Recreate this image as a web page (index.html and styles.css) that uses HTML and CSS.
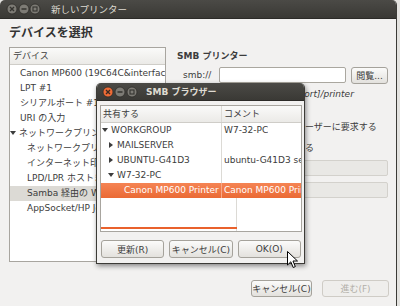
FILE: index.html
```html
<!DOCTYPE html>
<html lang="ja">
<head>
  <meta charset="UTF-8">
  <title>新しいプリンター</title>
  <link rel="stylesheet" href="styles.css">
</head>
<body>
  <div class="window">
    <div class="titlebar">
      <svg class="wbtns" width="36" height="12" viewBox="0 0 36 12">
        <circle cx="6" cy="6" r="5" fill="#7d7b75" stroke="#2e2d2a" stroke-width="0.8"/>
        <path d="M4 4 L8 8 M8 4 L4 8" stroke="#34332f" stroke-width="1.4"/>
        <circle cx="18" cy="6" r="5" fill="#7d7b75" stroke="#2e2d2a" stroke-width="0.8"/>
        <path d="M15.5 6 H20.5" stroke="#34332f" stroke-width="1.6"/>
        <circle cx="29" cy="6" r="5" fill="#7d7b75" stroke="#2e2d2a" stroke-width="0.8"/>
        <rect x="27" y="4" width="4" height="4" fill="none" stroke="#34332f" stroke-width="1.1"/>
      </svg>
      <span class="title">新しいプリンター</span>
    </div>

    <div class="content">
      <h1>デバイスを選択</h1>
      <div class="main">
        <div class="devices">
          <div class="col-head">デバイス</div>
          <ul class="dev-list">
            <li>Canon MP600 (19C64C&amp;interface)</li>
            <li>LPT #1</li>
            <li>シリアルポート #1</li>
            <li>URI の入力</li>
            <li class="group"><span class="tri down"></span>ネットワークプリンター</li>
            <li class="child">ネットワークプリンターの検索</li>
            <li class="child">インターネット印刷プロトコル (ipp)</li>
            <li class="child">LPD/LPR ホストまたはプリンター</li>
            <li class="child selected">Samba 経由の Windows プリンター</li>
            <li class="child">AppSocket/HP JetDirect</li>
          </ul>
        </div>

        <div class="detail">
          <h2>SMB プリンター</h2>
          <div class="uri-row">
            <span class="uri-label">smb://</span>
            <span class="entry"></span>
            <span class="btn small">閲覧...</span>
          </div>
          <div class="hint">smb://[workgroup/]server[:port]/printer</div>
          <h2 class="auth">認証</h2>
          <div class="radio"><span class="dot"></span>認証が必要な場合はユーザーに要求する</div>
          <div class="radio second"><span class="dot"></span>認証の詳細を今設定する</div>
          <div class="field"><span>パスワード:</span><span class="entry off"></span></div>
          <div class="field"><span>ユーザー名:</span><span class="entry off"></span></div>
        </div>
      </div>

      <div class="actions">
        <span class="btn cancel">キャンセル(C)</span>
        <span class="btn next off">進む(F)</span>
      </div>
    </div>

    <div class="smb-dialog">
      <div class="titlebar dlg">
        <svg class="wbtns" width="36" height="12" viewBox="0 0 36 12">
          <circle cx="6" cy="6" r="5" fill="#ef6b36" stroke="#2e2d2a" stroke-width="0.8"/>
          <path d="M4 4 L8 8 M8 4 L4 8" stroke="#3a2a22" stroke-width="1.4"/>
          <circle cx="18" cy="6" r="5" fill="#7d7b75" stroke="#2e2d2a" stroke-width="0.8"/>
          <path d="M15.5 6 H20.5" stroke="#34332f" stroke-width="1.6"/>
          <circle cx="30" cy="6" r="5" fill="#7d7b75" stroke="#2e2d2a" stroke-width="0.8"/>
          <rect x="28" y="4" width="4" height="4" fill="none" stroke="#34332f" stroke-width="1.1"/>
        </svg>
        <span class="title">SMB ブラウザー</span>
      </div>
      <div class="tree">
        <div class="tree-head">
          <span class="c1">共有する</span>
          <span class="c2">コメント</span>
        </div>
        <div class="tree-row"><span class="c1 l0"><span class="tri down"></span>WORKGROUP</span><span class="c2">W7-32-PC</span></div>
        <div class="tree-row"><span class="c1 l1"><span class="tri right"></span>MAILSERVER</span><span class="c2"></span></div>
        <div class="tree-row"><span class="c1 l1"><span class="tri right"></span>UBUNTU-G41D3</span><span class="c2">ubuntu-G41D3 server</span></div>
        <div class="tree-row"><span class="c1 l1"><span class="tri down"></span>W7-32-PC</span><span class="c2"></span></div>
        <div class="tree-row sel"><span class="c1 l2">Canon MP600 Printer</span><span class="c2">Canon MP600 Printer</span></div>
        <div class="tree-fill"><span class="scroll"></span></div>
      </div>
      <div class="dlg-actions">
        <span class="btn">更新(R)</span>
        <span class="btn">キャンセル(C)</span>
        <span class="btn">OK(O)</span>
      </div>
    </div>

    <svg class="cursor" width="12" height="18" viewBox="0 0 12 18">
      <path d="M0.5 0.5 L0.5 14 L3.8 10.8 L6.2 16.5 L8.3 15.6 L6 10 L10.5 10 Z" fill="#fff" stroke="#000" stroke-width="1"/>
    </svg>
  </div>
</body>
</html>
```

FILE: styles.css
```css
body {
  margin: 0;
  background-color: #e4e3e0;
  font-family: "DejaVu Sans", "Noto Sans CJK JP", sans-serif;
  font-size: 9px;
  color: #3c3c3c;
}
.window {
  position: relative;
  width: 396px;
  height: 306px;
  background-color: #f2f1f0;
  border-right: 1px solid #3c3b37;
  border-radius: 5px 5px 0 0;
  overflow: hidden;
}
.titlebar {
  display: flex;
  align-items: center;
  height: 19px;
  padding-left: 6px;
  background: linear-gradient(#4b4a46, #3a3935);
  border-bottom: 1px solid #2c2b28;
  box-sizing: border-box;
}
.wbtns { flex: none; }
.titlebar .title {
  margin-left: 9px;
  color: #dfdbd2;
  font-size: 9.5px;
}
.content {
  padding: 6px 7px 0 9px;
}
h1 {
  margin: 0;
  height: 16px;
  line-height: 16px;
  font-size: 12px;
  font-weight: bold;
  color: #333;
}
.main {
  display: flex;
  gap: 11px;
  margin-top: 6px;
  height: 215px;
}
.devices {
  width: 157px;
  flex: none;
  background-color: #fff;
  border: 1px solid #a8a59f;
  box-sizing: border-box;
  overflow: hidden;
}
.col-head {
  height: 17px;
  line-height: 16px;
  padding-left: 3px;
  background: linear-gradient(#fafaf9, #ebeae7);
  border-bottom: 1px solid #cfcdc8;
  box-sizing: border-box;
}
.dev-list {
  list-style: none;
  margin: 1px 0 0;
  padding: 0;
}
.dev-list li {
  height: 15px;
  line-height: 15px;
  padding-left: 10px;
  white-space: nowrap;
}
.dev-list .group { padding-left: 0; }
.dev-list .child { padding-left: 17px; }
.dev-list .selected { background-color: #dcdad5; }
.tri {
  display: inline-block;
  width: 0;
  height: 0;
  margin-right: 3px;
  vertical-align: 1px;
}
.tri.down {
  border-left: 3px solid transparent;
  border-right: 3px solid transparent;
  border-top: 4px solid #3c3c3c;
}
.tri.right {
  border-top: 3px solid transparent;
  border-bottom: 3px solid transparent;
  border-left: 4px solid #3c3c3c;
  margin-left: 1px;
  margin-right: 4px;
  vertical-align: 0;
}
.detail {
  flex: 1;
  padding-top: 2px;
}
h2 {
  margin: 0;
  height: 15px;
  line-height: 15px;
  font-size: 9px;
  font-weight: bold;
}
.uri-row {
  display: flex;
  align-items: center;
  margin-top: 2px;
  height: 18px;
  padding-left: 6px;
}
.uri-label { width: 36px; }
.entry {
  display: block;
  width: 127px;
  height: 16px;
  background-color: #fff;
  border: 1px solid #aaa79f;
  border-radius: 2px;
  box-sizing: border-box;
}
.btn {
  display: flex;
  align-items: center;
  justify-content: center;
  height: 17px;
  border: 1px solid #a5a29b;
  border-radius: 3px;
  background: linear-gradient(#fbfbfa, #e3e1dd);
  box-sizing: border-box;
  white-space: nowrap;
  color: #3c3c3c;
}
.btn.small {
  width: 37px;
  margin-left: 5px;
}
.hint {
  height: 15px;
  line-height: 15px;
  margin-top: 3px;
  font-style: italic;
  white-space: nowrap;
}
.auth {
  height: 14px;
  line-height: 14px;
}
.radio {
  display: flex;
  align-items: center;
  height: 20px;
  padding-left: 24px;
  white-space: nowrap;
}
.radio.second { margin-top: 1px; }
.dot {
  width: 8px;
  height: 8px;
  margin-right: 4px;
  border: 1px solid #999;
  border-radius: 50%;
  background: #fff;
}
.field {
  display: flex;
  align-items: center;
  justify-content: space-between;
  height: 16px;
  margin-top: 6px;
  padding-left: 34px;
  color: #a09d96;
}
.radio + .field { margin-top: 3px; }
.entry.off {
  width: 120px;
  background-color: #e9e8e5;
  border-color: #d3d1cc;
  margin-right: 1px;
}
.actions {
  display: flex;
  justify-content: flex-end;
  gap: 10px;
  margin-top: 18px;
}
.actions .cancel { width: 61px; }
.actions .next { width: 67px; }
.btn.off {
  color: #b3b0a9;
  border-color: #cfccc6;
  background: #efeeec;
}
.smb-dialog {
  position: absolute;
  left: 96px;
  top: 83px;
  width: 209px;
  height: 181px;
  background-color: #f2f1f0;
  border: 1px solid #3c3b37;
  border-top: none;
  border-radius: 5px 5px 0 0;
  box-sizing: border-box;
  box-shadow: 1px 2px 5px rgba(0, 0, 0, 0.45);
  overflow: hidden;
}
.titlebar.dlg {
  height: 18px;
  padding-left: 5px;
}
.titlebar.dlg .title {
  margin-left: 8px;
  font-weight: bold;
  font-size: 9px;
}
.tree {
  margin: 4px 2px 0 3px;
  height: 127px;
  background-color: #fff;
  border: 1px solid #a8a59f;
  box-sizing: border-box;
  display: flex;
  flex-direction: column;
}
.tree-head,
.tree-row {
  display: flex;
  white-space: nowrap;
  overflow: hidden;
}
.tree-head {
  height: 17px;
  line-height: 16px;
  background: linear-gradient(#fafaf9, #ebeae7);
  border-bottom: 1px solid #cfcdc8;
  box-sizing: border-box;
}
.tree-row {
  height: 15px;
  line-height: 15px;
}
.c1 {
  width: 121px;
  flex: none;
  padding-left: 2px;
  box-sizing: border-box;
  border-right: 1px solid #dcdad5;
  overflow: hidden;
}
.c2 {
  padding-left: 2px;
  overflow: hidden;
}
.c1.l0 { padding-left: 1px; }
.c1.l1 { padding-left: 7px; }
.c1.l2 { padding-left: 23px; }
.tree-row.sel {
  background: linear-gradient(#f58454, #ea6a35);
  color: #fff;
}
.tree-row.sel .c1 { border-right-color: #f7a887; }
.tree-fill {
  flex: 1;
  position: relative;
  width: 135px;
  border-right: 1px solid #dcdad5;
}
.scroll {
  position: absolute;
  left: 0;
  right: -1px;
  bottom: 2px;
  height: 2px;
  background-color: #e9612c;
}
.dlg-actions {
  display: flex;
  gap: 5px;
  margin: 8px 3px 0 4px;
}
.dlg-actions .btn {
  flex: 1;
  height: 18px;
}
.cursor {
  position: absolute;
  left: 287px;
  top: 251px;
}
```
